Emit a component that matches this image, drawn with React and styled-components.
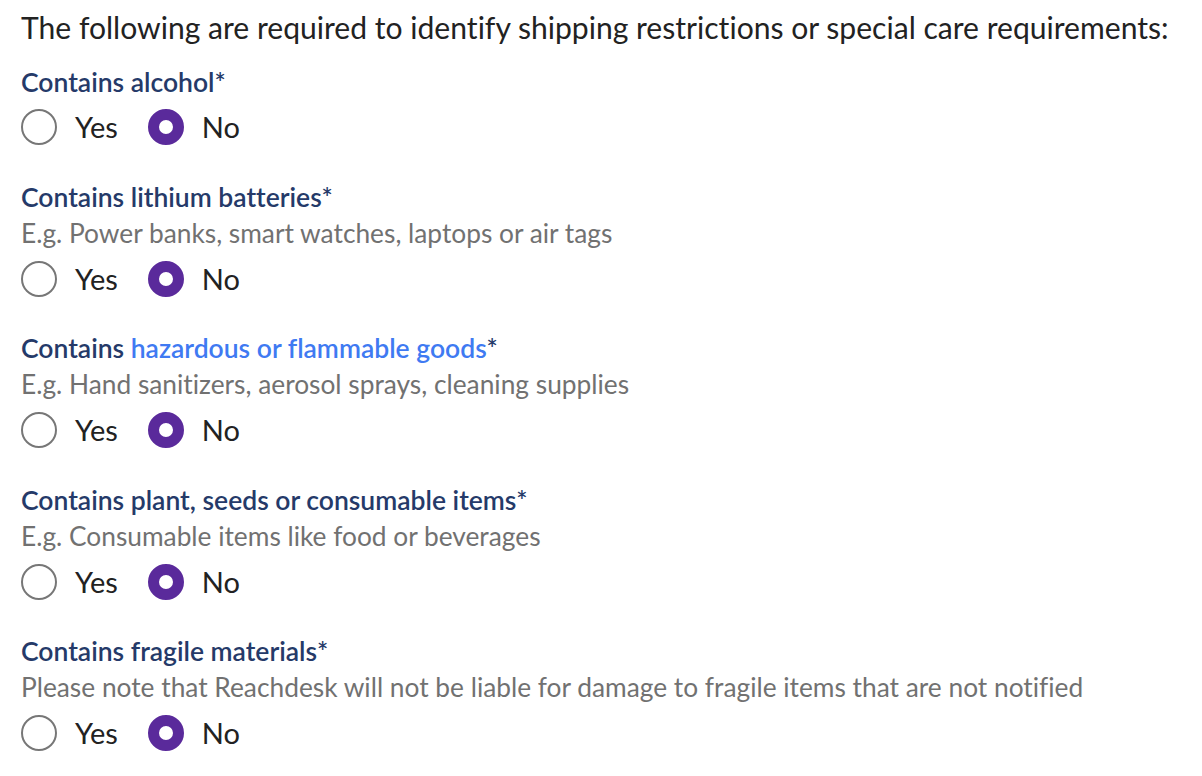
import React, { useState } from "react";
import styled, { createGlobalStyle } from "styled-components";

const Global = createGlobalStyle`
  html, body { margin: 0; padding: 0; background: #ffffff; }
  body {
    font-family: Lato, "Noto Sans", "Liberation Sans", sans-serif;
    font-variant-ligatures: none;
  }
`;

const Page = styled.div`
  padding: 7px 20px 0 21px;
  display: flex;
  flex-direction: column;
`;

const Heading = styled.p`
  margin: 0 0 19px;
  font-size: 30.1px;
  line-height: 40px;
  color: #222222;
  white-space: nowrap;
`;

const Group = styled.div`
  margin: 0 0 35px;
  display: flex;
  flex-direction: column;
  &:nth-of-type(3) { margin-bottom: 36px; }
`;

const Label = styled.div`
  font-size: 26.5px;
  line-height: 32px;
  font-weight: 600;
  color: #253a69;
  white-space: nowrap;
  margin-bottom: ${(p) => (p.$hasHint ? "4px" : "11px")};
`;

const Link = styled.a`
  color: #3f7af2;
  text-decoration: none;
`;

const Hint = styled.div`
  font-size: 26.3px;
  line-height: 32px;
  color: #717171;
  white-space: nowrap;
  margin-bottom: 12px;
`;

const Options = styled.div`
  display: flex;
  align-items: center;
  gap: 30px;
  height: 36px;
  margin-bottom: ${(p) => (p.$short ? "1px" : "0")};
`;

const Option = styled.label`
  display: flex;
  align-items: center;
  gap: 18px;
  font-size: 29px;
  line-height: 36px;
  color: #222222;
  cursor: pointer;
`;

const Circle = styled.span`
  box-sizing: border-box;
  width: 36px;
  height: 36px;
  flex: none;
  border-radius: 50%;
  border: ${(p) => (p.$checked ? "11px solid #5a2a9b" : "2.5px solid #777777")};
  background: #ffffff;
`;

const HiddenInput = styled.input`
  position: absolute;
  opacity: 0;
  width: 0;
  height: 0;
  margin: 0;
`;

const questions = [
  { id: "alcohol", label: "Contains alcohol" },
  { id: "lithium", label: "Contains lithium batteries", hint: "E.g. Power banks, smart watches, laptops or air tags" },
  { id: "hazard", label: "Contains ", link: "hazardous or flammable goods", hint: "E.g. Hand sanitizers, aerosol sprays, cleaning supplies" },
  { id: "plant", label: "Contains plant, seeds or consumable items", hint: "E.g. Consumable items like food or beverages" },
  { id: "fragile", label: "Contains fragile materials", hint: "Please note that Reachdesk will not be liable for damage to fragile items that are not notified" },
];

function Question({ q, value, onChange }) {
  return (
    <Group role="radiogroup" aria-label={q.label + (q.link || "")}>
      <Label $hasHint={!!q.hint}>
        {q.label}
        {q.link && <Link href="#">{q.link}</Link>}*
      </Label>
      {q.hint && <Hint>{q.hint}</Hint>}
      <Options $short={!q.hint}>
        {["Yes", "No"].map((opt) => (
          <Option key={opt}>
            <HiddenInput
              type="radio"
              name={q.id}
              checked={value === opt}
              onChange={() => onChange(opt)}
            />
            <Circle $checked={value === opt} />
            {opt}
          </Option>
        ))}
      </Options>
    </Group>
  );
}

export default function App() {
  const [answers, setAnswers] = useState({
    alcohol: "No",
    lithium: "No",
    hazard: "No",
    plant: "No",
    fragile: "No",
  });
  return (
    <>
      <Global />
      <Page>
        <Heading>The following are required to identify shipping restrictions or special care requirements:</Heading>
        {questions.map((q) => (
          <Question
            key={q.id}
            q={q}
            value={answers[q.id]}
            onChange={(v) => setAnswers((a) => ({ ...a, [q.id]: v }))}
          />
        ))}
      </Page>
    </>
  );
}
